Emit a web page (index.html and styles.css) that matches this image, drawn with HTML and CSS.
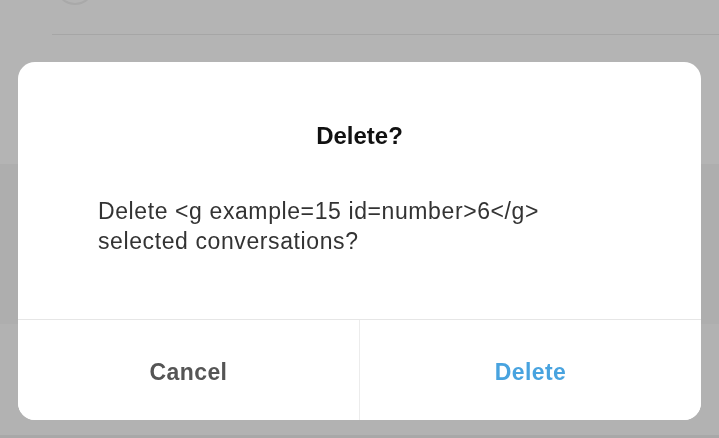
FILE: index.html
```html
<!DOCTYPE html>
<html>
<head>
<meta charset="utf-8">
<link rel="stylesheet" href="styles.css">
</head>
<body>
<div class="screen">
  <div class="band band-top">
    <div class="row">
      <div class="avatar"></div>
      <div class="ghost-text"></div>
    </div>
    <div class="divider"></div>
  </div>
  <div class="band band-mid"></div>
  <div class="band band-low"></div>
</div>
<div class="overlay">
  <div class="dialog">
    <div class="content">
      <h1 class="title">Delete?</h1>
      <p class="message">Delete &lt;g example=15 id=number&gt;6&lt;/g&gt;<br>selected conversations?</p>
    </div>
    <div class="actions">
      <button class="btn btn-cancel">Cancel</button>
      <button class="btn btn-delete">Delete</button>
    </div>
  </div>
</div>
</body>
</html>
```
FILE: styles.css
```css
html, body {
  margin: 0;
  padding: 0;
  width: 719px;
  height: 438px;
  overflow: hidden;
  font-family: "Liberation Sans", Arial, sans-serif;
  background: #b3b3b3;
}
.screen {
  display: flex;
  flex-direction: column;
  height: 438px;
}
.band-top {
  height: 164px;
  background: #b4b4b4;
}
.row {
  height: 34px;
  display: flex;
  align-items: flex-start;
  padding-left: 55px;
}
.avatar {
  width: 36px;
  height: 36px;
  border-radius: 50%;
  border: 2px solid #a9a9a9;
  margin-top: -35px;
}
.divider {
  margin-left: 52px;
  height: 1px;
  background: #a6a6a6;
}
.band-mid {
  height: 160px;
  background: #aeaeae;
}
.band-low {
  flex: 1;
  background: #b2b2b2;
  border-bottom: 3px solid #a8a8a8;
}
.overlay {
  position: fixed;
  inset: 0;
  padding: 62px 18px 0 18px;
}
.dialog {
  background: #fff;
  border-radius: 17px;
  height: 358px;
  display: flex;
  flex-direction: column;
  overflow: hidden;
}
.content {
  height: 258px;
  box-sizing: border-box;
  padding: 59px 60px 0 80px;
  border-bottom: 1px solid #e6e6e6;
}
.title {
  margin: 0 0 0 -20px;
  text-align: center;
  font-size: 24px;
  line-height: 30px;
  font-weight: bold;
  color: #111;
}
.message {
  margin: 45px 0 0 0;
  font-size: 23px;
  letter-spacing: 0.6px;
  line-height: 30px;
  color: #333;
  white-space: nowrap;
}
.actions {
  flex: 1;
  display: flex;
}
.btn {
  flex: 1;
  border: none;
  background: #fff;
  font-family: "Liberation Sans", Arial, sans-serif;
  font-size: 23px;
  letter-spacing: 0.4px;
  font-weight: bold;
  margin: 0;
  padding: 4px 0 0 0;
}
.btn-cancel {
  color: #555;
  border-right: 1px solid #ececec;
}
.btn-delete {
  color: #48a3df;
}
```
